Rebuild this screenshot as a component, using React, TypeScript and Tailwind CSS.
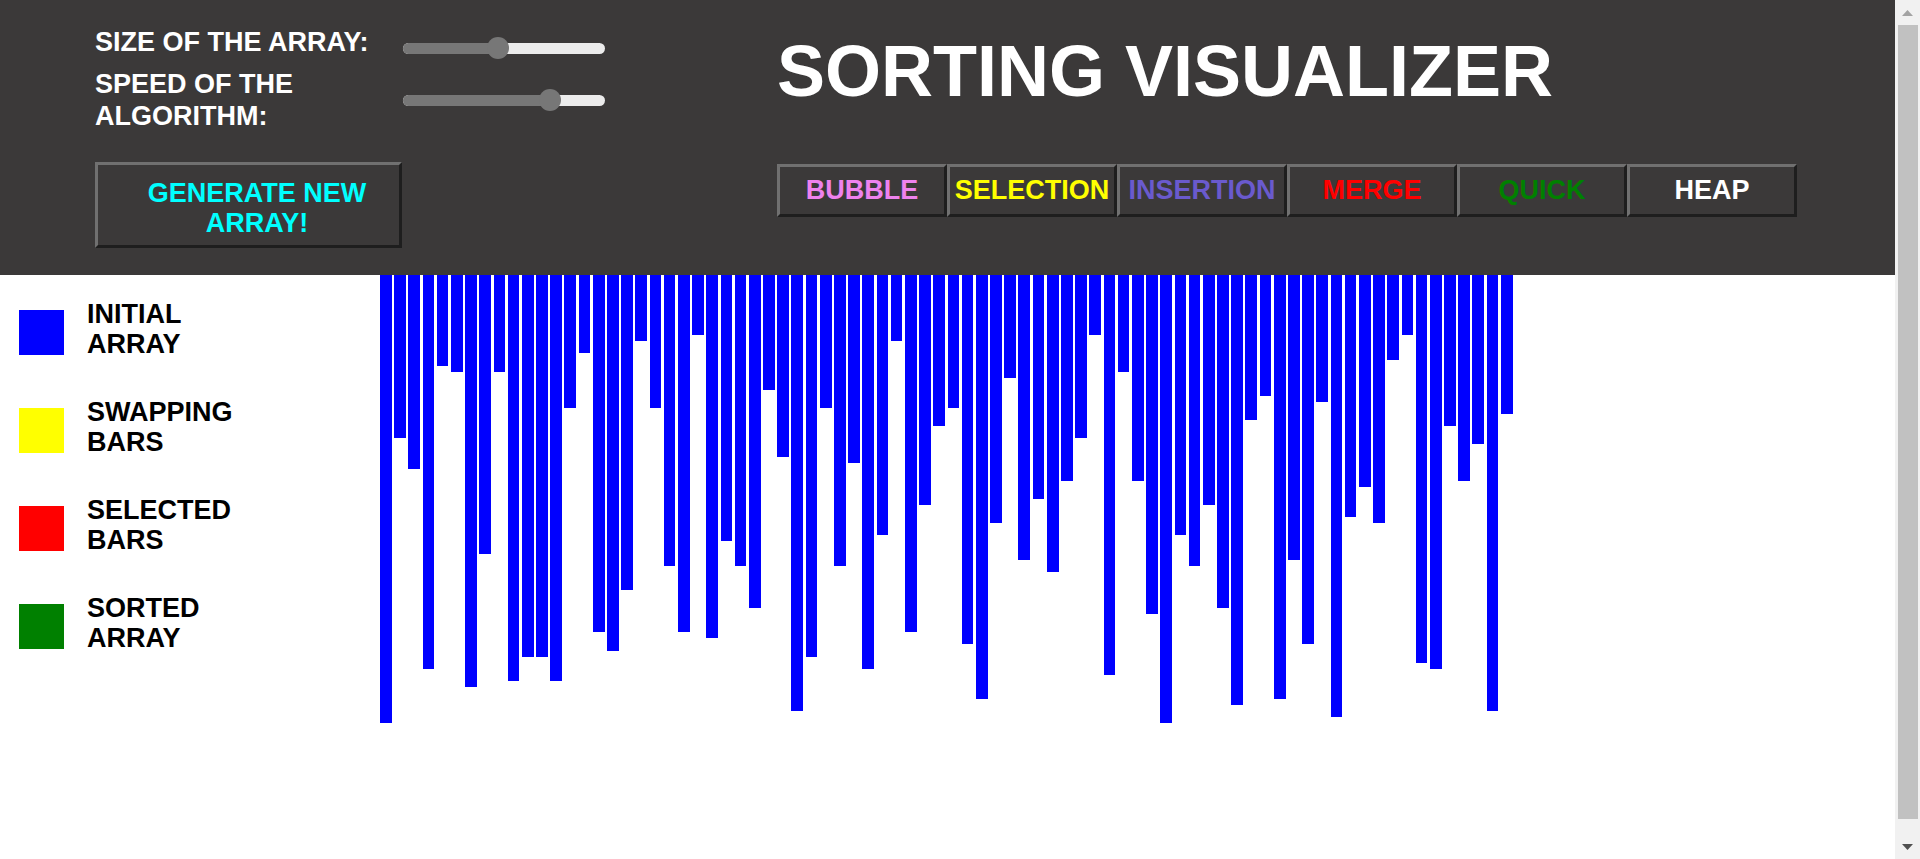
import React from 'react'

// bar heights read off the screenshot (px)
const bars = [
  448, 163, 194, 394, 91, 97, 412, 279, 97, 406, 382, 382, 406, 133, 78, 357, 376, 315, 66, 133,
  291, 357, 60, 363, 266, 291, 333, 115, 182, 436, 382, 133, 291, 188, 394, 260, 66, 357, 230, 151,
  133, 369, 424, 248, 103, 285, 224, 297, 206, 163, 60, 400, 97, 206, 339, 448, 260, 291, 230, 333,
  430, 145, 121, 424, 285, 369, 127, 442, 242, 212, 248, 85, 60, 388, 394, 151, 206, 169, 436, 139,
]

const algorithms = [
  { name: 'BUBBLE', color: 'text-[#ee82ee]' },
  { name: 'SELECTION', color: 'text-[#ffff00]' },
  { name: 'INSERTION', color: 'text-[#6a5acd]' },
  { name: 'MERGE', color: 'text-[#ff0000]' },
  { name: 'QUICK', color: 'text-[#008000]' },
  { name: 'HEAP', color: 'text-white' },
]

const legend = [
  { color: 'bg-[#0000ff]', lines: ['INITIAL', 'ARRAY'] },
  { color: 'bg-[#ffff00]', lines: ['SWAPPING', 'BARS'] },
  { color: 'bg-[#ff0000]', lines: ['SELECTED', 'BARS'] },
  { color: 'bg-[#008000]', lines: ['SORTED', 'ARRAY'] },
]

function Slider({ value }: { value: number }) {
  // value = thumb centre offset from the left of the track, in px
  return (
    <div className="relative w-[202px] h-[22px] flex items-center">
      <div className="w-full h-[11px] rounded-full bg-[#ececec] overflow-hidden">
        <div className="h-full bg-[#777777]" style={{ width: value }} />
      </div>
      <div
        className="absolute top-0 w-[22px] h-[22px] rounded-full bg-[#777777]"
        style={{ left: value - 11 }}
      />
    </div>
  )
}

function Scrollbar() {
  return (
    <div className="w-[25px] shrink-0 bg-[#f1f1f1] flex flex-col">
      <div className="h-[25px] flex items-center justify-center">
        <svg width="11" height="6" viewBox="0 0 11 6">
          <polygon points="5.5,0 11,6 0,6" fill="#a3a3a3" />
        </svg>
      </div>
      <div className="flex-1 px-[2.5px]">
        <div className="h-[794px] bg-[#c1c1c1]" />
      </div>
      <div className="h-[25px] flex items-center justify-center">
        <svg width="11" height="6" viewBox="0 0 11 6">
          <polygon points="0,0 11,0 5.5,6" fill="#505050" />
        </svg>
      </div>
    </div>
  )
}

export default function App() {
  return (
    <div className="flex h-[859px] overflow-hidden bg-white font-['Liberation_Sans',Arial,sans-serif] font-bold">
      <div className="flex-1 flex flex-col">
        {/* Header */}
        <header className="h-[275px] shrink-0 bg-[#3b3939] flex">
          <div className="w-[777px] shrink-0 pl-[95px] pt-[26px] flex flex-col text-white text-[27px] leading-[32px]">
            <div className="flex items-start">
              <div className="w-[308px]">SIZE OF THE ARRAY:</div>
              <div className="mt-[11px]">
                <Slider value={95} />
              </div>
            </div>
            <div className="flex items-start mt-[9px]">
              <div className="w-[308px]">
                SPEED OF THE
                <br />
                ALGORITHM:
              </div>
              <div className="mt-[21px]">
                <Slider value={147} />
              </div>
            </div>
            <button className="mt-[30px] w-[307px] h-[86px] border-[3px] border-t-[#707070] border-l-[#707070] border-r-[#1e1e1e] border-b-[#1e1e1e] bg-[#3b3939] pl-[17px] pt-[6px] text-[#00ffff] text-[27px] leading-[30px] font-bold text-center">
              GENERATE NEW
              <br />
              ARRAY!
            </button>
          </div>
          <div className="flex flex-col">
            <h1 className="mt-[30px] text-white text-[72px] leading-[82px] font-bold whitespace-nowrap">
              SORTING VISUALIZER
            </h1>
            <div className="mt-[52px] flex">
              {algorithms.map((a) => (
                <button
                  key={a.name}
                  className={`w-[170px] h-[53px] border-[3px] border-t-[#707070] border-l-[#707070] border-r-[#1e1e1e] border-b-[#1e1e1e] bg-[#3b3939] text-[27px] leading-none font-bold flex items-center justify-center whitespace-nowrap ${a.color}`}
                >
                  {a.name}
                </button>
              ))}
            </div>
          </div>
        </header>

        {/* Body */}
        <div className="flex flex-1">
          <div className="w-[380px] shrink-0 pl-[19px] pt-[24px] flex flex-col gap-[38px]">
            {legend.map((l) => (
              <div key={l.lines[0]} className="flex items-center h-[60px]">
                <div className={`w-[45px] h-[45px] mt-[6px] ${l.color}`} />
                <div className="ml-[23px] text-black text-[27px] leading-[30px]">
                  {l.lines[0]}
                  <br />
                  {l.lines[1]}
                </div>
              </div>
            ))}
          </div>
          <div className="flex items-start gap-[2.5px]">
            {bars.map((h, i) => (
              <div key={i} className="w-[11.7px] bg-[#0000ff]" style={{ height: h }} />
            ))}
          </div>
        </div>
      </div>
      <Scrollbar />
    </div>
  )
}
